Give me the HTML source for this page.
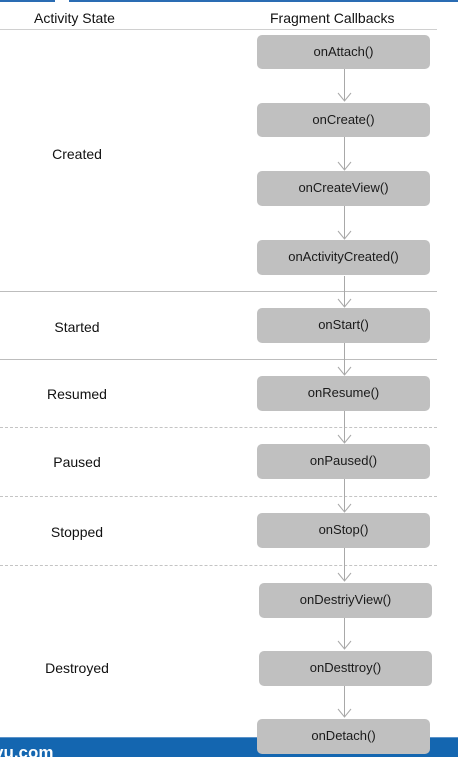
<!DOCTYPE html>
<html><head><meta charset="utf-8"><style>
html,body{margin:0;padding:0;background:#fff;}
body{width:458px;height:756px;position:relative;overflow:hidden;font-family:"Liberation Sans",sans-serif;}
.b{position:absolute;left:257px;width:173px;height:34px;background:#c0c0c0;border-radius:5px;font-size:13px;color:#1a1a1a;text-align:center;line-height:33px;}
.l{position:absolute;width:154px;left:0;text-align:center;font-size:14px;color:#111;}
.h{position:absolute;top:10px;font-size:14px;color:#111;}
.sl{position:absolute;left:0;width:437px;height:0;border-top:1px solid #bdbdbd;}
.dl{position:absolute;left:0;width:437px;height:0;border-top:1px dashed #c4c4c4;}
</style></head><body>
<div style="position:absolute;top:0;left:0;width:55px;height:2px;background:#2a6cb3"></div>
<div style="position:absolute;top:0;left:69px;width:389px;height:2px;background:#2a6cb3"></div>
<div class="h" style="left:34px">Activity State</div>
<div class="h" style="left:270px">Fragment Callbacks</div>
<div class="sl" style="top:29px;border-color:#d0d0d0"></div>
<div class="sl" style="top:291px"></div>
<div class="sl" style="top:359px"></div>
<div class="dl" style="top:427px"></div>
<div class="dl" style="top:496px"></div>
<div class="dl" style="top:565px"></div>
<svg style="position:absolute;left:0;top:0" width="458" height="756">
<g stroke="#a8a8a8" stroke-width="1" fill="none">
<path d="M344.5 69V101M338 93L344.5 101L351 93"/>
<path d="M344.5 137V170M338 162L344.5 170L351 162"/>
<path d="M344.5 206V239M338 231L344.5 239L351 231"/>
<path d="M344.5 276V307M338 299L344.5 307L351 299"/>
<path d="M344.5 343V375M338 367L344.5 375L351 367"/>
<path d="M344.5 411V443M338 435L344.5 443L351 435"/>
<path d="M344.5 479V512M338 504L344.5 512L351 504"/>
<path d="M344.5 548V581M338 573L344.5 581L351 573"/>
<path d="M344.5 618V649M338 641L344.5 649L351 641"/>
<path d="M344.5 686V717M338 709L344.5 717L351 709"/>
</g></svg>
<div style="position:absolute;left:0;top:737px;width:458px;height:19px;background:#1466b0;border-top:1px solid #5b93c9"></div>
<div style="position:absolute;left:-6px;top:743px;font-size:17px;font-weight:bold;color:#fff;line-height:20px">yu.com</div>
<div class="b" style="top:35px">onAttach()</div>
<div class="b" style="top:103px">onCreate()</div>
<div class="b" style="top:171px;height:35px">onCreateView()</div>
<div class="b" style="top:240px;height:35px">onActivityCreated()</div>
<div class="b" style="top:308px;height:35px">onStart()</div>
<div class="b" style="top:376px;height:35px">onResume()</div>
<div class="b" style="top:444px;height:35px">onPaused()</div>
<div class="b" style="top:513px;height:35px">onStop()</div>
<div class="b" style="top:583px;left:259px;height:35px">onDestriyView()</div>
<div class="b" style="top:651px;left:259px;height:35px">onDesttroy()</div>
<div class="b" style="top:719px;height:35px">onDetach()</div>
<div class="l" style="top:146px">Created</div>
<div class="l" style="top:319px">Started</div>
<div class="l" style="top:386px">Resumed</div>
<div class="l" style="top:454px">Paused</div>
<div class="l" style="top:524px">Stopped</div>
<div class="l" style="top:660px">Destroyed</div>
</body></html>
